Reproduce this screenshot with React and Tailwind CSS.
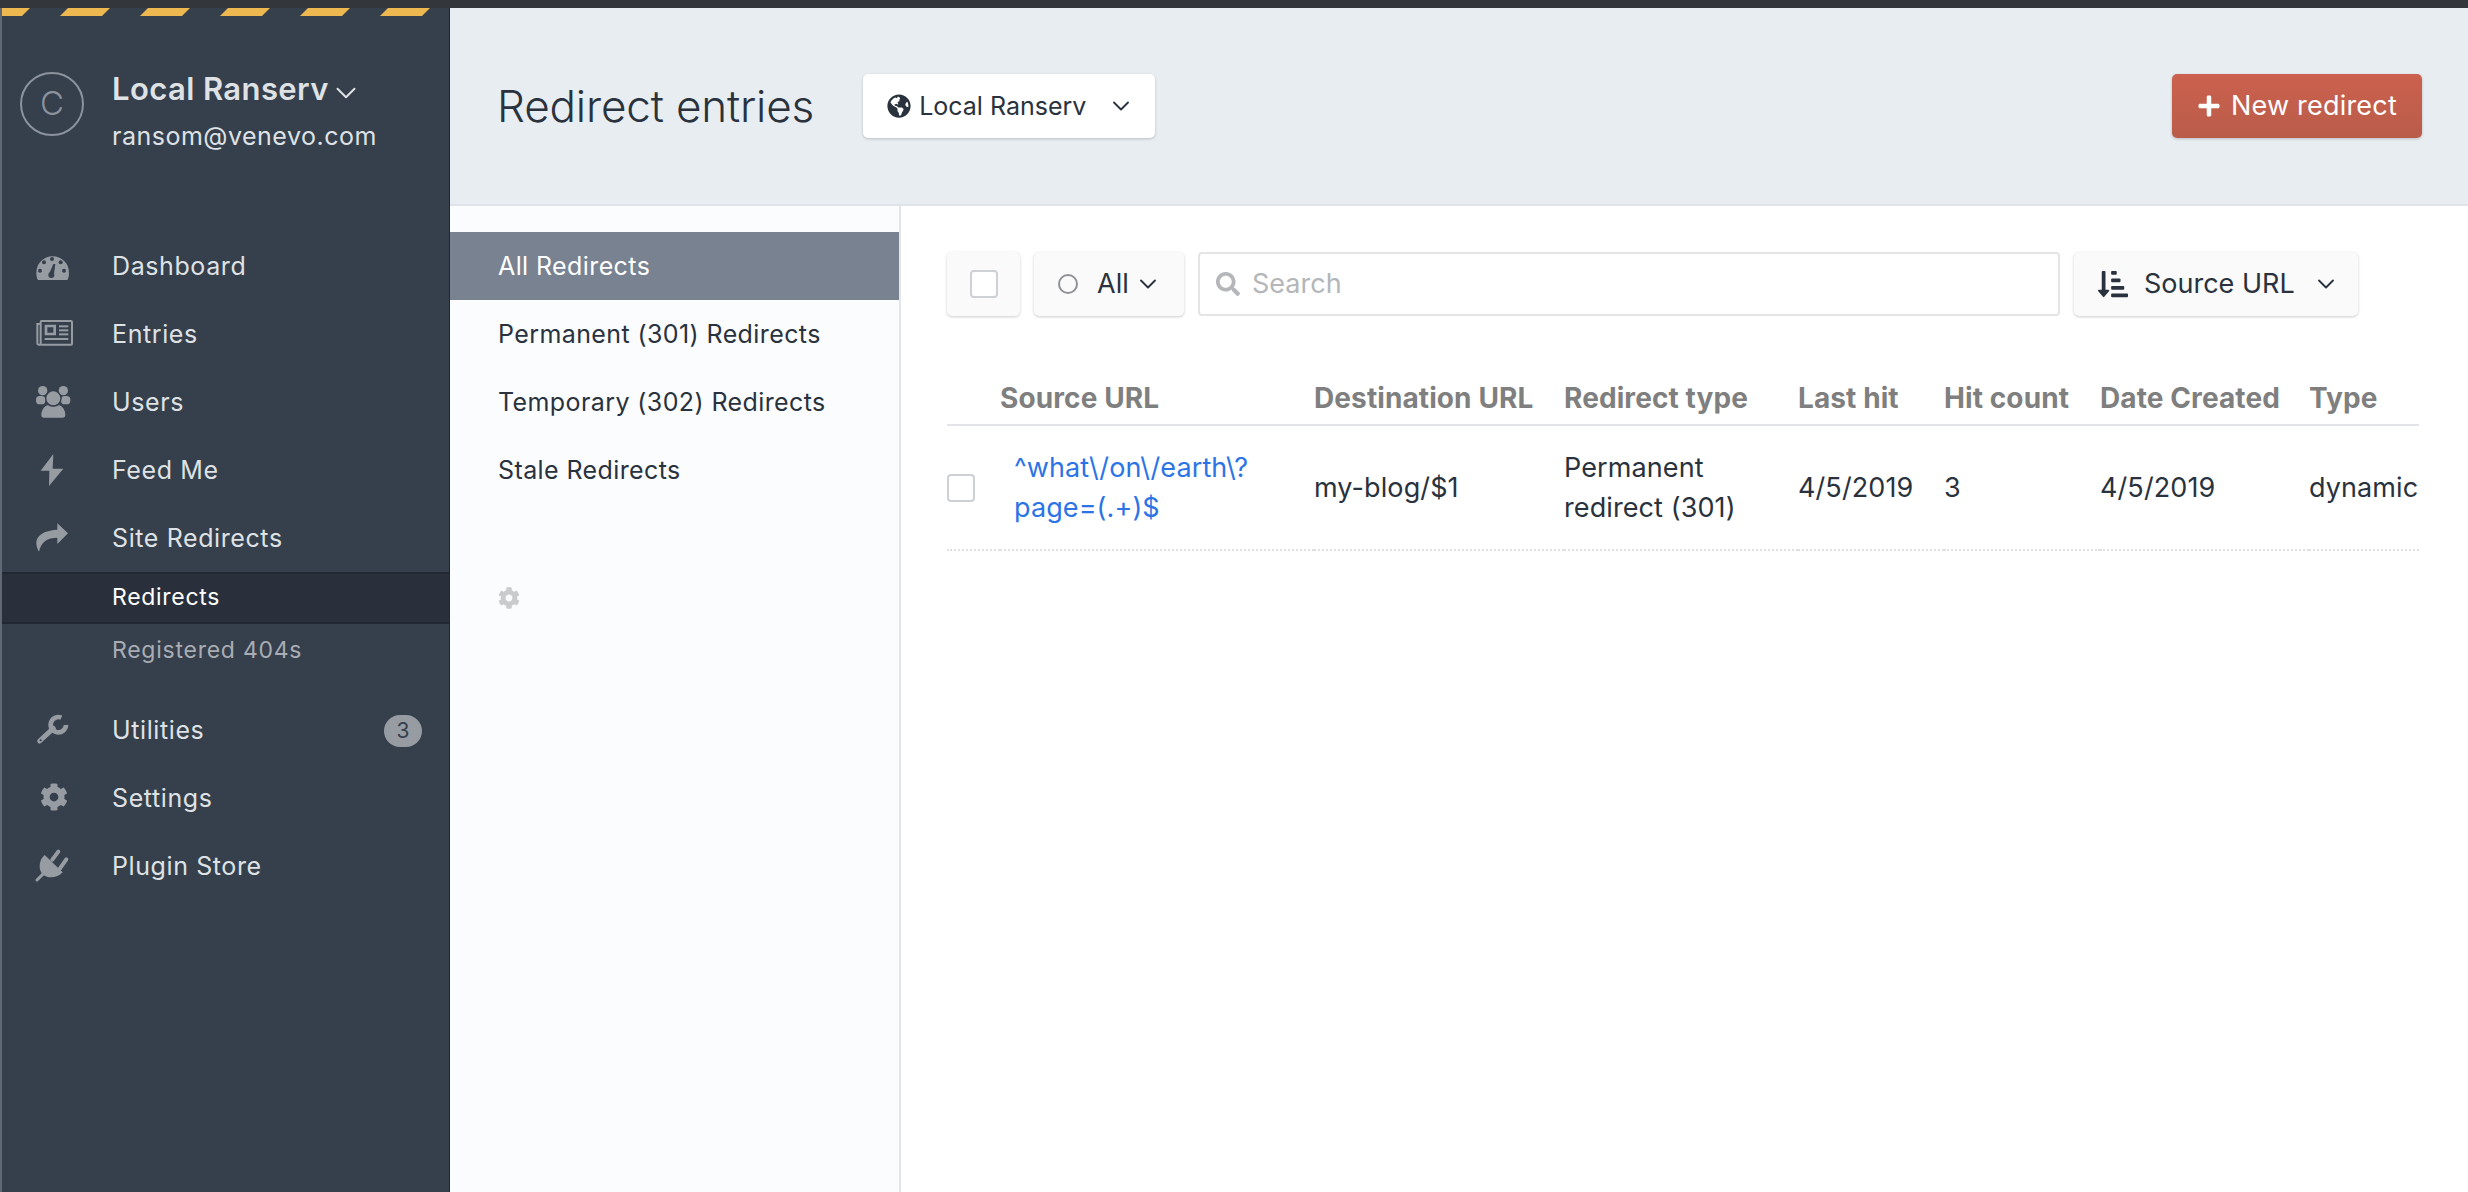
import React from 'react';
import { FaCog, FaGlobeAmericas, FaPlus, FaSearch, FaSortAmountDownAlt } from 'react-icons/fa';
import { LuChevronDown } from 'react-icons/lu';

const iconFill = '#979ca3';
const sidebarBg = '#363f4c';

// Sidebar icons: 60x68 box, drawn in 3x units so they line up with the row
function RowIcon({ view, children }) {
  return (
    <svg className="block h-[68px] w-[60px]" viewBox={`${view} 180 204`} fill={iconFill}>
      {children}
    </svg>
  );
}

const DashboardIcon = () => (
  <RowIcon view="0 -51">
    <path d="M42 90C38 85 37 75 37 68A49 49 0 0 1 135 68C135 75 134 85 130 90Z" />
    <g fill={sidebarBg}>
      <circle cx="84" cy="27" r="6" />
      <circle cx="60" cy="37" r="6" />
      <circle cx="110" cy="37" r="6" />
      <circle cx="48" cy="62" r="6" />
      <circle cx="120" cy="62" r="6" />
      <polygon points="88,42 94,42 90,72 76,70" />
      <circle cx="82" cy="75" r="9" />
    </g>
  </RowIcon>
);

const EntriesIcon = () => (
  <RowIcon view="0 153">
    <g fill="none" stroke={iconFill} strokeWidth="6">
      <rect x="50" y="213" width="94" height="71" rx="3" />
      <path d="M50 222H40V280Q40 284 44 284H50" />
    </g>
    <path fillRule="evenodd" d="M62 224H96V256H62ZM70 232V248H88V232Z" />
    <rect x="105" y="226" width="28" height="6" />
    <rect x="105" y="238" width="28" height="6" />
    <rect x="105" y="250" width="28" height="6" />
    <rect x="62" y="264" width="71" height="6" />
  </RowIcon>
);

const UsersIcon = () => (
  <RowIcon view="0 357">
    <circle cx="56" cy="422" r="14" />
    <circle cx="118" cy="422" r="14" />
    <rect x="36" y="438" width="28" height="25" rx="11" />
    <rect x="111" y="438" width="28" height="25" rx="11" />
    <circle cx="88" cy="445" r="23" stroke={sidebarBg} strokeWidth="4" />
    <path d="M50 496C50 478 60 465 72 463Q88 474 104 463C116 465 126 478 126 496Q126 505 116 505H60Q50 505 50 496Z" stroke={sidebarBg} strokeWidth="4" />
  </RowIcon>
);

const FeedIcon = () => (
  <RowIcon view="72 621">
    <polygon points="160,672 122,722 148,722 147,768 190,716 158,716" />
  </RowIcon>
);

const ShareIcon = () => (
  <RowIcon view="0 -30">
    <path d="M45 110C28 80 36 48 100 44V25L132 55L100 87V68C70 68 52 80 45 110Z" />
  </RowIcon>
);

const WrenchIcon = () => (
  <RowIcon view="0 -36">
    <path d="M112 26A23 23 0 1 0 126 48" fill="none" stroke={iconFill} strokeWidth="14" />
    <path d="M47 96L88 58" fill="none" stroke={iconFill} strokeWidth="15" strokeLinecap="round" />
    <circle cx="50" cy="94" r="3" fill={sidebarBg} />
  </RowIcon>
);

const SettingsIcon = () => (
  <span className="flex h-[68px] w-[60px] items-center justify-center pb-[4px] text-[28px] text-[#979ca3]">
    <FaCog />
  </span>
);

const PluginIcon = () => (
  <RowIcon view="0 372">
    <path d="M62 438L116 490C100 508 70 510 55 495C42 480 45 452 62 438Z" />
    <path d="M39 513L62 490" fill="none" stroke={iconFill} strokeWidth="9" strokeLinecap="round" />
    <path d="M85 452L103 428M108 478L127 451" fill="none" stroke={iconFill} strokeWidth="12" strokeLinecap="round" />
  </RowIcon>
);

const mainNav = [
  { label: 'Dashboard', icon: DashboardIcon },
  { label: 'Entries', icon: EntriesIcon },
  { label: 'Users', icon: UsersIcon },
  { label: 'Feed Me', icon: FeedIcon },
  { label: 'Site Redirects', icon: ShareIcon },
];

const bottomNav = [
  { label: 'Utilities', icon: WrenchIcon, badge: '3' },
  { label: 'Settings', icon: SettingsIcon },
  { label: 'Plugin Store', icon: PluginIcon },
];

const sources = ['All Redirects', 'Permanent (301) Redirects', 'Temporary (302) Redirects', 'Stale Redirects'];

const stripes = [-22, 58, 138, 218, 298, 378];

function NavRow({ item }) {
  const Icon = item.icon;
  return (
    <a className="flex h-[68px] items-center text-[25px] tracking-[0.6px] text-[#dfe2e5]">
      <span className="ml-[22px] mr-[28px] shrink-0">
        <Icon />
      </span>
      <span>{item.label}</span>
      {item.badge && (
        <span className="ml-auto mr-[27px] flex h-[32px] w-[38px] items-center justify-center rounded-full bg-[#979ca3] text-[21px] tracking-normal text-[#363f4c]">
          {item.badge}
        </span>
      )}
    </a>
  );
}

function Checkbox() {
  return <span className="block h-[28px] w-[28px] rounded-[4px] border-2 border-[#cdd0d4] bg-white" />;
}

function Chevron({ className }) {
  return <LuChevronDown strokeWidth={1.6} className={`shrink-0 text-[28px] ${className}`} />;
}

function App() {
  return (
    <div className="flex h-screen flex-col overflow-hidden bg-white font-['Inter',sans-serif] text-[#29323d]">
      <div className="h-[8px] shrink-0 bg-[#33373b]" />
      <div className="flex min-h-0 flex-1">
        {/* Sidebar */}
        <aside className="w-[450px] shrink-0 border-l-2 border-r border-l-[#5f6873] border-r-[#1f2630] bg-[#363f4c]">
          <svg className="block h-[8px] w-full" viewBox="0 0 447 8">
            {stripes.map((x) => (
              <polygon key={x} points={`${x + 8},0 ${x + 50},0 ${x + 42},8 ${x},8`} fill="#ecb84f" />
            ))}
          </svg>
          <div className="flex h-[217px] items-start pl-[18px] pt-[56px]">
            <div className="flex h-[64px] w-[64px] items-center justify-center rounded-full border-2 border-[#8a939e] text-[33px] font-light text-[#8a939e]">
              C
            </div>
            <div className="ml-[28px]">
              <div className="-mt-[3px] flex h-[40px] items-center text-[31px] font-semibold tracking-[0.4px] text-[#dfe2e5]">
                Local Ranserv
                <LuChevronDown strokeWidth={1.4} className="mt-[8px] text-[34px]" />
              </div>
              <div className="mt-[9px] text-[25px] tracking-[0.5px] text-[#dfe2e5]">ransom@venevo.com</div>
            </div>
          </div>

          <nav>
            {mainNav.map((item) => (
              <NavRow key={item.label} item={item} />
            ))}
            <div className="-mt-[1px] flex h-[52px] items-center border-y-2 border-[#222832] bg-[#2a303b] pb-[1px] pl-[110px] text-[23px] tracking-[0.7px] text-white">
              Redirects
            </div>
            <div className="flex h-[52px] items-center pl-[110px] text-[23px] tracking-[0.75px] text-[#a9adb3]">
              Registered 404s
            </div>
            <div className="mt-[21px]">
              {bottomNav.map((item) => (
                <NavRow key={item.label} item={item} />
              ))}
            </div>
          </nav>
        </aside>

        <div className="flex min-w-0 flex-1 flex-col">
          {/* Page header */}
          <header className="flex h-[198px] shrink-0 items-center border-b-2 border-[#e0e4e8] bg-[#e8edf1] pl-[48px] pr-[46px]">
            <h1 className="-ml-[1px] text-[44px] font-light tracking-[-0.15px] text-[#29323d]">Redirect entries</h1>
            <button className="ml-[49px] flex h-[64px] w-[292px] items-center rounded-[5px] bg-white pl-[24px] text-[25px] shadow-[0_1px_3px_rgba(0,0,0,0.2)]">
              <FaGlobeAmericas className="text-[24px]" />
              <span className="ml-[8px] pt-[1px]">Local Ranserv</span>
              <Chevron className="ml-[21px]" />
            </button>
            <button className="ml-auto flex h-[64px] w-[250px] items-center justify-center rounded-[5px] bg-gradient-to-b from-[#cb614e] to-[#ba5c4a] text-[27px] tracking-[0.2px] text-white shadow-[0_1px_3px_rgba(0,0,0,0.2)]">
              <FaPlus className="mr-[10px] text-[24px]" />
              New redirect
            </button>
          </header>

          <div className="flex min-h-0 flex-1">
            {/* Sources */}
            <div className="w-[451px] shrink-0 border-r-2 border-[#e3e5e9] bg-[#fbfcfe] pt-[26px]">
              {sources.map((source, i) => (
                <a
                  key={source}
                  className={`flex h-[68px] items-center pl-[48px] pt-[2px] text-[25px] tracking-[0.4px] ${
                    i === 0 ? 'bg-[#788290] text-white' : 'text-[#29323d]'
                  }`}
                >
                  {source}
                </a>
              ))}
              <div className="pl-[48px] pt-[83px] text-[22px] text-[#c9cbcd]">
                <FaCog />
              </div>
            </div>

            {/* Main content */}
            <main className="min-w-0 flex-1 pl-[46px] pt-[46px]">
              <div className="flex h-[64px] items-stretch">
                <div className="flex w-[73px] items-center justify-center rounded-[5px] bg-[#fafafa] shadow-[0_1px_3px_rgba(0,0,0,0.2)]">
                  <Checkbox />
                </div>
                <button className="ml-[14px] flex w-[150px] items-center rounded-[5px] bg-[#fafafa] pl-[24px] text-[27px] shadow-[0_1px_3px_rgba(0,0,0,0.2)]">
                  <span className="h-[20px] w-[20px] rounded-full border-2 border-[#8f9296]" />
                  <span className="ml-[19px]">All</span>
                  <Chevron className="ml-[5px]" />
                </button>
                <div className="ml-[14px] flex w-[862px] items-center rounded-[4px] border-2 border-[#e3e5e6] bg-white pl-[16px]">
                  <FaSearch className="text-[24px] text-[#b4b6b9]" />
                  <span className="ml-[12px] text-[27px] text-[#b4b6b9]">Search</span>
                </div>
                <button className="ml-[14px] flex w-[284px] items-center rounded-[5px] bg-[#fafafa] pl-[24px] text-[27px] shadow-[0_1px_3px_rgba(0,0,0,0.2)]">
                  <FaSortAmountDownAlt className="text-[30px]" />
                  <span className="ml-[16px]">Source URL</span>
                  <Chevron className="ml-[17px]" />
                </button>
              </div>

              <table className="mt-[61px] w-[1472px] table-fixed border-collapse text-left text-[27px] tracking-[0.1px]">
                <thead>
                  <tr className="h-[48px] border-b-2 border-[#e3e3ec] text-[28px] text-[#7f7f7f]">
                    <th className="w-[53px]" />
                    <th className="w-[314px] align-top font-bold">Source URL</th>
                    <th className="w-[250px] align-top font-bold">Destination URL</th>
                    <th className="w-[234px] align-top font-bold">Redirect type</th>
                    <th className="w-[146px] align-top font-bold">Last hit</th>
                    <th className="w-[156px] align-top font-bold">Hit count</th>
                    <th className="w-[209px] align-top font-bold">Date Created</th>
                    <th className="w-[110px] align-top font-bold">Type</th>
                  </tr>
                </thead>
                <tbody>
                  <tr className="h-[125px] border-b-2 border-dotted border-[#dfdfe4] leading-[40px]">
                    <td>
                      <Checkbox />
                    </td>
                    <td className="pl-[14px] pr-[40px] text-[#2c74e6]">{'^what\\/on\\/earth\\?page=(.+)$'}</td>
                    <td>my-blog/$1</td>
                    <td className="pr-[30px]">Permanent redirect (301)</td>
                    <td>4/5/2019</td>
                    <td>3</td>
                    <td>4/5/2019</td>
                    <td>dynamic</td>
                  </tr>
                </tbody>
              </table>
            </main>
          </div>
        </div>
      </div>
    </div>
  );
}

export default App;
